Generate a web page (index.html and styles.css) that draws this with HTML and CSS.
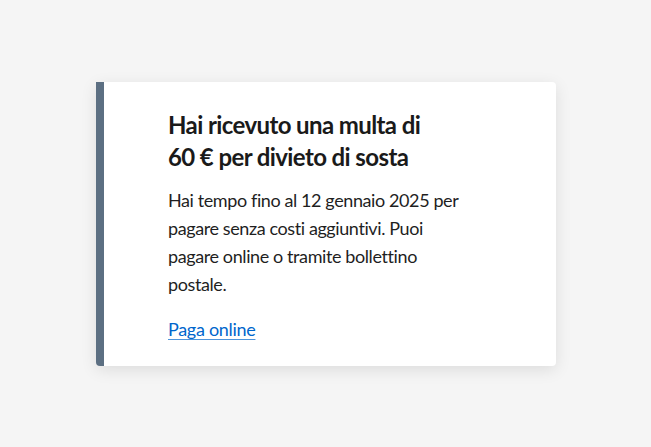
FILE: index.html
```html
<!DOCTYPE html>
<html lang="it">
<head>
<meta charset="utf-8">
<link rel="stylesheet" href="styles.css">
</head>
<body>
<main class="page">
  <section class="callout">
    <h2 class="callout-title">Hai ricevuto una multa di<br>60 € per divieto di sosta</h2>
    <p class="callout-text">Hai tempo fino al 12 gennaio 2025 per<br>pagare senza costi aggiuntivi. Puoi<br>pagare online o tramite bollettino<br>postale.</p>
    <a class="callout-link" href="#">Paga online</a>
  </section>
</main>
</body>
</html>
```
FILE: styles.css
```css
html, body {
  margin: 0;
  padding: 0;
  background: #f5f5f5;
}
.page {
  width: 651px;
  height: 447px;
  display: flex;
  align-items: flex-start;
  padding: 82px 0 0 96px;
  box-sizing: border-box;
  font-family: "Lato", "Noto Sans", sans-serif;
}
.callout {
  width: 460px;
  height: 284px;
  box-sizing: border-box;
  background: #ffffff;
  border-left: 8px solid #5c6f82;
  border-radius: 0 4px 4px 4px;
  box-shadow: 0 4px 16px rgba(0, 0, 0, 0.10);
  padding: 27px 0 0 64px;
  display: flex;
  flex-direction: column;
  align-items: flex-start;
}
.callout-title {
  margin: 0;
  font-size: 24px;
  line-height: 32px;
  font-weight: 700;
  letter-spacing: -0.6px;
  color: #1a1a1a;
}
.callout-text {
  margin: 13px 0 0;
  font-size: 18px;
  line-height: 28px;
  letter-spacing: -0.4px;
  color: #1f1f1f;
}
.callout-link {
  margin-top: 17px;
  font-size: 18px;
  line-height: 28px;
  letter-spacing: -0.3px;
  color: #0066cc;
  text-decoration: underline;
  text-decoration-color: #4d94db;
  text-underline-offset: 3px;
  text-decoration-thickness: 1px;
}
```
